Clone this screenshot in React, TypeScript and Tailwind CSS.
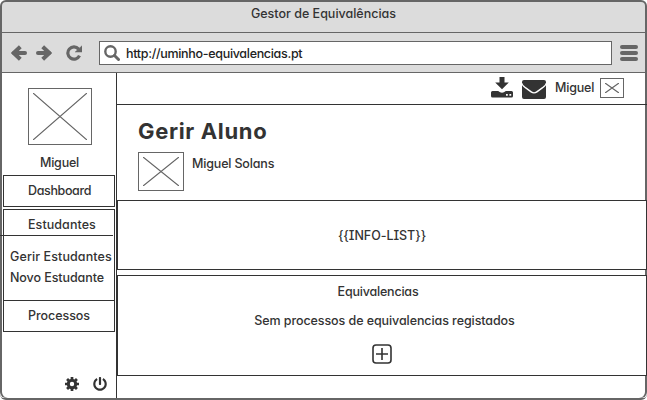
import type { ReactNode } from "react";
import { FaPowerOff } from "react-icons/fa";

function Placeholder({ className }: { className: string }) {
  return (
    <div className={`shrink-0 border border-[#666] bg-white p-[4px] ${className}`}>
      <svg className="block h-full w-full" viewBox="0 0 100 100" preserveAspectRatio="none" stroke="#666" fill="none">
        <path d="M0 0 100 100M100 0 0 100" vectorEffect="non-scaling-stroke" strokeWidth="1.2" />
      </svg>
    </div>
  );
}

function ArrowIcon({ className }: { className: string }) {
  return (
    <svg className={`h-4 w-4 shrink-0 ${className}`} viewBox="0 0 16 16" fill="none" stroke="#666" strokeWidth="4">
      <path d="M9.300 1.700 2.700 8l6.600 6.300" strokeLinejoin="miter" />
      <path d="M3 8h11" strokeLinecap="round" />
    </svg>
  );
}

function ReloadIcon() {
  return (
    <svg className="h-4 w-4 shrink-0" viewBox="0 0 16 16" fill="none">
      <path d="M12.600 4.100A6.100 6.100 0 1 0 13.500 10.600" stroke="#666" strokeWidth="3.200" />
      <path d="M16 0.800V7H9.200Z" fill="#666" stroke="#666" strokeWidth="0.500" strokeLinejoin="round" />
    </svg>
  );
}

function SearchIcon() {
  return (
    <svg className="h-[16px] w-[16px] shrink-0" viewBox="0 0 16 16" fill="none" stroke="#666">
      <circle cx="6.500" cy="6.500" r="5.200" strokeWidth="2.400" />
      <path d="m10.500 10.500 4 4" strokeWidth="3" strokeLinecap="round" />
    </svg>
  );
}

function DownloadIcon() {
  return (
    <svg className="h-[21px] w-[22px] shrink-0" viewBox="0 0 22 21" fill="#333">
      <path d="M8.500 0h5v5.500h4.300L11 12.300 4.200 5.500H8.500Z" />
      <path
        fillRule="evenodd"
        d="M1.500 14H7.200Q11 17.500 14.800 14H20.500Q22 14 22 15.500v3.500q0 1.500-1.500 1.500h-19Q0 20.500 0 19v-3.500Q0 14 1.500 14ZM15 17v1.800h1.800V17ZM18.400 17v1.800h1.800V17Z"
      />
    </svg>
  );
}

function EnvelopeIcon() {
  return (
    <svg className="mt-[7px] ml-[9px] h-[19px] w-[24px] shrink-0" viewBox="0 0 24 19" fill="#333">
      <path d="M2 0h20q2 0 2 2v.500Q23.500 4.500 21 6.500l-7 5q-2 1.300-4 0L3 6.500Q.500 4.500 0 2.500V2Q0 0 2 0Z" />
      <path d="M0 5.300Q1 6.800 3 8.200l5.700 4.300q3.300 2.200 6.600 0L21 8.200q2-1.400 3-2.900V17q0 2-2 2H2q-2 0-2-2Z" />
    </svg>
  );
}

function GearIcon() {
  return (
    <svg className="h-[14px] w-[14px] shrink-0" viewBox="0 0 14 14" fill="none" stroke="#333">
      <circle cx="7" cy="7" r="3.700" strokeWidth="3" />
      <path
        d="M7 0v2.500M7 11.500V14M0 7h2.500M11.500 7H14M2.050 2.050 3.800 3.800M10.200 10.200l1.750 1.750M11.950 2.050 10.200 3.800M3.800 10.200 2.050 11.950"
        strokeWidth="2.700"
      />
    </svg>
  );
}

function SideLabel({ children, className }: { children: ReactNode; className: string }) {
  return <div className={`pl-6 leading-[16px] ${className}`}>{children}</div>;
}

export default function App() {
  return (
    <div className="flex h-[400px] w-[647px] flex-col overflow-hidden rounded-[6px] bg-[#666] pt-[2px] pb-[2px] font-['Inter','Open_Sans',sans-serif] text-[12.5px] leading-[16px] font-medium text-[#333] [font-feature-settings:'cv11','cv08']">
      <header className="mx-[2px] h-[31px] shrink-0 rounded-t-[4px] border-b border-[#666] bg-[#dcdcdc] pt-[4px] text-center">
        <span>Gestor de Equivalências</span>
      </header>
      <div className="mx-[2px] flex h-[40px] shrink-0 items-center border-b border-[#666] bg-[#dcdcdc] pl-[9px] text-[#666]">
        <ArrowIcon className="" />
        <ArrowIcon className="ml-[9px] rotate-180" />
        <div className="ml-[14px]"><ReloadIcon /></div>
        <div className="ml-[17px] flex h-[24px] w-[513px] items-center border border-[#666] bg-white pl-[4px]">
          <SearchIcon />
          <span className="ml-[6px] pt-[2px] tracking-[-0.31px] text-[#222]">http://uminho-equivalencias.pt</span>
        </div>
        <div className="ml-[8px] flex flex-col gap-[2px]">
          <div className="h-[4px] w-[18px] rounded-[2px] bg-[#666]" />
          <div className="h-[4px] w-[18px] rounded-[2px] bg-[#666]" />
          <div className="h-[4px] w-[18px] rounded-[2px] bg-[#666]" />
        </div>
      </div>
      <div className="flex min-h-0 grow rounded-b-[4px] bg-white">
        <aside className="flex w-[117px] shrink-0 flex-col rounded-bl-[6px] border-r border-r-[#333] shadow-[inset_2px_0_0_#666]">
          <Placeholder className="mt-[15px] ml-[28px] h-[57px] w-[64px]" />
          <div className="mt-[10px] ml-[3px] text-center tracking-[-0.2px]">Miguel</div>
          <div className="mt-[4px] ml-[3px] h-[32px] w-[112px] border border-[#333] pt-[7px]">
            <SideLabel className="tracking-[-0.36px]">Dashboard</SideLabel>
          </div>
          <div className="mt-[2px] ml-[3px] flex h-[123px] w-[112px] flex-col border border-[#333]">
            <div className="pt-[7px]"><SideLabel className="tracking-[0.07px]">Estudantes</SideLabel></div>
            <div className="mt-[2px] -ml-[4px] h-px w-[113px] shrink-0 bg-[#333]" />
            <div className="h-[64px] pt-[10px] pl-[6px] leading-[21px] whitespace-nowrap">
              <div className="tracking-[0.1px]">Gerir Estudantes</div>
              <div className="tracking-[-0.08px]">Novo Estudante</div>
            </div>
            <div className="grow border-t border-[#333] pt-[7px]"><SideLabel className="tracking-[-0.05px]">Processos</SideLabel></div>
          </div>
          <div className="mt-auto flex items-center gap-[14px] pb-[7px] pl-[65px]">
            <GearIcon />
            <FaPowerOff className="h-[14px] w-[14px]" />
          </div>
        </aside>
        <main className="flex grow flex-col rounded-br-[6px] shadow-[inset_-2px_0_0_#666]">
          <div className="flex h-[32px] shrink-0 items-start justify-end border-b border-[#333] pr-[23px]">
            <div className="mt-[4px]"><DownloadIcon /></div>
            <EnvelopeIcon />
            <span className="mt-[7px] mr-[6px] ml-[9px] w-[39px] tracking-[-0.2px]">Miguel</span>
            <Placeholder className="mt-[5px] h-[20px] w-[24px]" />
          </div>
          <section className="h-[95px] shrink-0 pl-[21px]">
            <h1 className="pt-[12px] text-[22px] leading-[28px] font-bold tracking-[0.65px]">Gerir Aluno</h1>
            <div className="mt-[7px] flex">
              <Placeholder className="h-[39px] w-[46px]" />
              <span className="mt-[4px] ml-[8px] tracking-[-0.17px]">Miguel Solans</span>
            </div>
          </section>
          <section className="flex h-[70px] shrink-0 items-center justify-center border border-[#333] bg-white pt-[2px]">
            <span className="tracking-[-0.05px]">{"{{INFO-LIST}}"}</span>
          </section>
          <section className="mt-[5px] flex h-[101px] shrink-0 flex-col items-center border border-[#333] bg-white pt-[8px]">
            <span className="mr-[8px] tracking-[-0.2px]">Equivalencias</span>
            <span className="mt-[13px] ml-[5px] tracking-[-0.08px]">Sem processos de equivalencias registados</span>
            <svg className="mt-[15px] h-[20px] w-[20px]" viewBox="0 0 20 20" fill="none" stroke="#333">
              <rect x="1" y="1" width="18" height="18" rx="3" strokeWidth="1.600" />
              <path d="M4 10h12M10 4v12" strokeWidth="1.600" />
            </svg>
          </section>
        </main>
      </div>
    </div>
  );
}
